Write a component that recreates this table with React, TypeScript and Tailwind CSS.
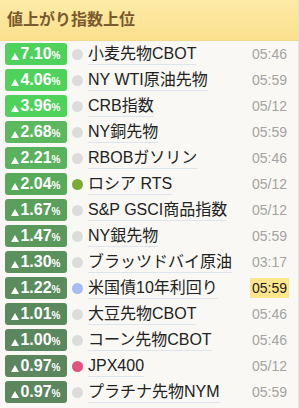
import React from 'react'

type Row = {
  pct: string
  badge: string
  dot: string
  name: string
  time: string
  hot?: boolean
}

const ROWS: Row[] = [
  { pct: '7.10', badge: 'bg-[#4fd25c]', dot: 'bg-[#dcdcdc]', name: '小麦先物CBOT', time: '05:46' },
  { pct: '4.06', badge: 'bg-[#4fd25c]', dot: 'bg-[#dcdcdc]', name: 'NY WTI原油先物', time: '05:59' },
  { pct: '3.96', badge: 'bg-[#4fd25c]', dot: 'bg-[#dcdcdc]', name: 'CRB指数', time: '05/12' },
  { pct: '2.68', badge: 'bg-[#5bb85f]', dot: 'bg-[#dcdcdc]', name: 'NY銅先物', time: '05:59' },
  { pct: '2.21', badge: 'bg-[#5bb25e]', dot: 'bg-[#dcdcdc]', name: 'RBOBガソリン', time: '05:46' },
  { pct: '2.04', badge: 'bg-[#57aa59]', dot: 'bg-[#7cab35]', name: 'ロシア RTS', time: '05/12' },
  { pct: '1.67', badge: 'bg-[#5aa05c]', dot: 'bg-[#dcdcdc]', name: 'S&P GSCI商品指数', time: '05/12' },
  { pct: '1.47', badge: 'bg-[#5a985c]', dot: 'bg-[#dcdcdc]', name: 'NY銀先物', time: '05:59' },
  { pct: '1.30', badge: 'bg-[#5b915d]', dot: 'bg-[#dcdcdc]', name: 'ブラッツドバイ原油', time: '03:17' },
  { pct: '1.22', badge: 'bg-[#5b8c5e]', dot: 'bg-[#a6bdf2]', name: '米国債10年利回り', time: '05:59', hot: true },
  { pct: '1.01', badge: 'bg-[#5b895e]', dot: 'bg-[#dcdcdc]', name: '大豆先物CBOT', time: '05:46' },
  { pct: '1.00', badge: 'bg-[#5b875e]', dot: 'bg-[#dcdcdc]', name: 'コーン先物CBOT', time: '05:46' },
  { pct: '0.97', badge: 'bg-[#5b865e]', dot: 'bg-[#e0527a]', name: 'JPX400', time: '05/12' },
  { pct: '0.97', badge: 'bg-[#5b865e]', dot: 'bg-[#dcdcdc]', name: 'プラチナ先物NYM', time: '05:59' },
]

// up arrow drawn as a small triangle
function UpMark() {
  return (
    <svg width="8" height="7" viewBox="0 0 8 7" className="mr-[1px] self-center mt-[3px]">
      <polygon points="4,0 8,7 0,7" fill="#fff" />
    </svg>
  )
}

function RankRow({ row }: { row: Row }) {
  return (
    <div className="flex h-[26px] items-center">
      {/* change badge */}
      <div
        className={`ml-[5px] flex h-[22px] w-[62px] shrink-0 items-baseline justify-center rounded-[3px] pt-[1px] font-bold text-white ${row.badge}`}
      >
        <UpMark />
        <span className="text-[16px] leading-[20px]">{row.pct}</span>
        <span className="text-[10px] leading-none">%</span>
      </div>
      <span className={`ml-[5px] h-[11px] w-[11px] shrink-0 rounded-full ${row.dot}`} />
      <span className="ml-[5px] whitespace-nowrap border-b border-[#dde4ee] text-[16px] leading-[21px] text-[#222]">
        {row.name}
      </span>
      <span
        className={`ml-auto mr-[9px] px-[2px] text-[14px] leading-[20px] ${
          row.hot ? 'bg-[#fde68c] text-[#222]' : 'text-[#a3a3a3]'
        }`}
      >
        {row.time}
      </span>
    </div>
  )
}

export default function App() {
  return (
    <div
      className="h-[408px] w-[299px] overflow-hidden border-r border-[#e4e1da] bg-[#f9f8f4]"
      style={{ fontFamily: '"Liberation Sans", "Noto Sans CJK JP", sans-serif' }}
    >
      <div className="flex h-[41px] items-center border-b border-[#f3d98a] bg-gradient-to-b from-[#fdeba6] to-[#fbe08e] pl-[7px]">
        <h2 className="text-[16px] font-bold text-[#7a5a2e]">値上がり指数上位</h2>
      </div>
      <div className="flex flex-col">
        {ROWS.map((row, i) => (
          <RankRow key={i} row={row} />
        ))}
      </div>
    </div>
  )
}
